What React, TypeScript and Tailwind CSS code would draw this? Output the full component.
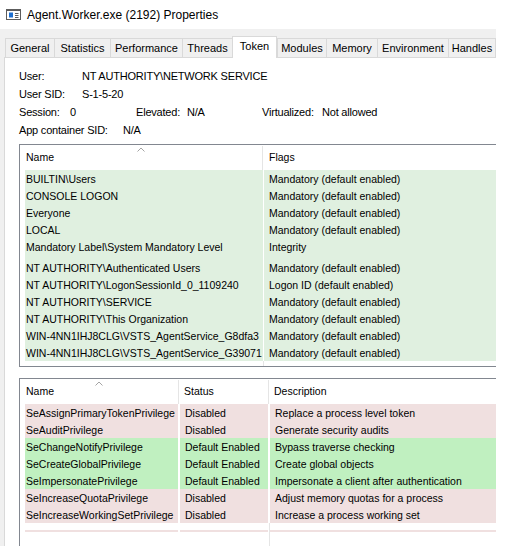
import React from 'react'

const MANDATORY = 'Mandatory (default enabled)'

const groups: [string, string][] = [
  ['BUILTIN\\Users', MANDATORY],
  ['CONSOLE LOGON', MANDATORY],
  ['Everyone', MANDATORY],
  ['LOCAL', MANDATORY],
  ['Mandatory Label\\System Mandatory Level', 'Integrity'],
  ['NT AUTHORITY\\Authenticated Users', MANDATORY],
  ['NT AUTHORITY\\LogonSessionId_0_1109240', 'Logon ID (default enabled)'],
  ['NT AUTHORITY\\SERVICE', MANDATORY],
  ['NT AUTHORITY\\This Organization', MANDATORY],
  ['WIN-4NN1IHJ8CLG\\VSTS_AgentService_G8dfa3', MANDATORY],
  ['WIN-4NN1IHJ8CLG\\VSTS_AgentService_G39071', MANDATORY],
]

const privileges: [string, string, string][] = [
  ['SeAssignPrimaryTokenPrivilege', 'Disabled', 'Replace a process level token'],
  ['SeAuditPrivilege', 'Disabled', 'Generate security audits'],
  ['SeChangeNotifyPrivilege', 'Default Enabled', 'Bypass traverse checking'],
  ['SeCreateGlobalPrivilege', 'Default Enabled', 'Create global objects'],
  ['SeImpersonatePrivilege', 'Default Enabled', 'Impersonate a client after authentication'],
  ['SeIncreaseQuotaPrivilege', 'Disabled', 'Adjust memory quotas for a process'],
  ['SeIncreaseWorkingSetPrivilege', 'Disabled', 'Increase a process working set'],
]

const tabs: [string, string][] = [
  ['General', 'w-[49px]'],
  ['Statistics', 'w-[56px]'],
  ['Performance', 'w-[72px]'],
  ['Threads', 'w-[50px]'],
  ['Token', 'w-[45px]'],
  ['Modules', 'w-[49px]'],
  ['Memory', 'w-[51px]'],
  ['Environment', 'w-[71px]'],
  ['Handles', 'w-[48px]'],
]

function WindowIcon() {
  return (
    <svg width="15" height="11" viewBox="0 0 15 11" aria-hidden="true">
      <rect x="0.5" y="0.5" width="14" height="10" fill="#fff" stroke="#5c5c5c" />
      <rect x="0" y="0" width="15" height="2" fill="#5c5c5c" />
      <rect x="3" y="3.5" width="4" height="5" fill="#1e6fd0" />
      <path d="M9 4.5h3.5M9 6.5h3.5M9 8.5h3.5" stroke="#5c5c5c" strokeWidth="1" />
    </svg>
  )
}

function SortArrow() {
  return (
    <svg className="absolute top-[1px] left-1/2 -translate-x-1/2" width="8" height="5" viewBox="0 0 8 5" aria-hidden="true">
      <path d="M0.5 4.5L4 1l3.5 3.5" fill="none" stroke="#a4a4a4" strokeWidth="1" />
    </svg>
  )
}

function privColor(status: string) {
  return status === 'Disabled' ? 'bg-[#f0e0e0]' : 'bg-[#c0f0c0]'
}

export default function App() {
  return (
    <div className="w-[510px] h-[546px] overflow-hidden bg-white text-black font-['Liberation_Sans',Arial,sans-serif]">
      {/* Title bar */}
      <div className="h-[29px] flex items-center pl-[6px] gap-[6px]">
        <WindowIcon />
        <span className="text-[12px] leading-none">Agent.Worker.exe (2192) Properties</span>
      </div>

      <div className="w-[496px] h-[517px] bg-[#f0f0f0] pl-[4px] flex flex-col">
        {/* Tabs */}
        <div className="h-[28px] shrink-0 flex items-end pl-[1px] text-[11px]">
          {tabs.map(([name, w], i) =>
            name === 'Token' ? (
              <div key={name} className={`${w} h-[22px] -mb-px relative z-10 bg-white border-t border-l border-r border-[#d9d9d9] flex items-center justify-center pb-[2px]`}>
                {name}
              </div>
            ) : (
              <div
                key={name}
                className={`${w} h-[19px] border-t border-l border-[#d9d9d9] bg-[#f0f0f0] flex items-center justify-center ${i === tabs.length - 1 ? 'border-r' : ''}`}
              >
                {name}
              </div>
            )
          )}
        </div>

        {/* Tab page */}
        <div className="flex-1 bg-white border-t border-l border-[#d9d9d9] overflow-hidden">
          {/* Token summary */}
          <div className="pt-[9px] pl-[14px] text-[11px] tracking-[-0.2px]">
            <div className="h-[18px] flex items-center">
              <span className="w-[63px]">User:</span>
              <span>NT AUTHORITY\NETWORK SERVICE</span>
            </div>
            <div className="h-[18px] flex items-center">
              <span className="w-[63px]">User SID:</span>
              <span>S-1-5-20</span>
            </div>
            <div className="h-[18px] flex items-center">
              <span className="w-[51px]">Session:</span>
              <span className="w-[66px]">0</span>
              <span className="w-[51px]">Elevated:</span>
              <span className="w-[75px]">N/A</span>
              <span className="w-[60px]">Virtualized:</span>
              <span>Not allowed</span>
            </div>
            <div className="h-[18px] flex items-center">
              <span className="w-[104px]">App container SID:</span>
              <span>N/A</span>
            </div>
          </div>

          {/* Groups list */}
          <div className="mt-[5px] ml-[14px] w-[490px] border-t border-l border-b border-[#828790] text-[10.5px] whitespace-nowrap">
            <div className="h-[25px] flex pt-px">
              <div className="relative w-[243px] border-r border-[#e5e5e5] pl-[6px] flex items-center">
                <SortArrow />
                Name
              </div>
              <div className="flex-1 pl-[6px] flex items-center">Flags</div>
            </div>
            {groups.map(([name, flags]) => {
              const tall = name.startsWith('Mandatory Label')
              return (
                <div key={name} className={`flex pl-[5px] leading-[16px] ${tall ? 'h-[21px]' : 'h-[17px]'}`}>
                  <div className="w-[238px] bg-[#e0f0e0] pl-[1px] pt-px overflow-hidden">{name}</div>
                  <div className="w-px" />
                  <div className="flex-1 bg-[#e0f0e0] pl-[5px] pt-px">{flags}</div>
                </div>
              )
            })}
            <div className="h-[5px] pl-[243px]">
              <div className="w-px h-full bg-[#e5e5e5]" />
            </div>
          </div>

          {/* Privileges list */}
          <div className="mt-[11px] ml-[14px] w-[490px] h-[200px] border-t border-l border-[#828790] text-[10.5px] whitespace-nowrap">
            <div className="h-[25px] flex pt-px">
              <div className="relative w-[159px] border-r border-[#e5e5e5] pl-[6px] flex items-center">
                <SortArrow />
                Name
              </div>
              <div className="w-[90px] border-r border-[#e5e5e5] pl-[5px] flex items-center">Status</div>
              <div className="flex-1 pl-[5px] flex items-center">Description</div>
            </div>
            {privileges.map(([name, status, desc]) => (
              <div key={name} className="flex h-[17px] pl-[5px] leading-[16px]">
                <div className={`w-[153px] pl-[1px] pt-px overflow-hidden ${privColor(status)}`}>{name}</div>
                <div className="w-[2px]" />
                <div className={`w-[88px] pl-[5px] pt-px overflow-hidden ${privColor(status)}`}>{status}</div>
                <div className="w-[2px]" />
                <div className={`flex-1 pl-[5px] pt-px ${privColor(status)}`}>{desc}</div>
              </div>
            ))}
            <div className="h-[7px] pl-[249px]">
              <div className="w-px h-full bg-[#e5e5e5]" />
            </div>
            <div className="flex h-[2px] pl-[5px]">
              <div className="w-[153px] bg-[#f0e0e0]" />
              <div className="w-[2px]" />
              <div className="w-[88px] bg-[#f0e0e0]" />
              <div className="w-[1px]" />
              <div className="w-px bg-[#e5e5e5]" />
              <div className="flex-1 bg-[#f0e0e0]" />
            </div>
            <div className="h-[40px] pl-[249px]">
              <div className="w-px h-full bg-[#e5e5e5]" />
            </div>
          </div>
        </div>
      </div>
    </div>
  )
}
